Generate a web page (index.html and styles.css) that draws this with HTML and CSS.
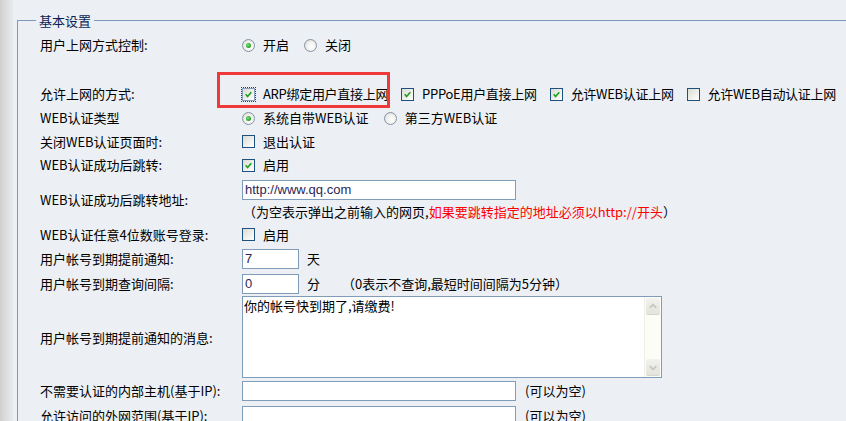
FILE: index.html
```html
<!DOCTYPE html>
<html lang="zh-CN">
<head>
<meta charset="utf-8">
<title>基本设置</title>
<link rel="stylesheet" href="styles.css">
</head>
<body>
<div class="page">
  <div class="strip"></div>
  <div class="main">
    <fieldset class="box">
      <legend>基本设置</legend>
      <div class="form">
        <div class="row r1">
          <div class="lbl">用户上网方式控制:</div>
          <div class="ctl">
            <span class="opt"><span class="radio on"></span>开启</span>
            <span class="opt"><span class="radio"></span>关闭</span>
          </div>
        </div>
        <div class="row r2">
          <div class="lbl">允许上网的方式:</div>
          <div class="ctl">
            <span class="opt"><span class="cb focus"><svg viewBox="0 0 13 13"><path d="M3.2 6.2 L5.4 8.8 L9.8 3.9"/></svg></span>ARP绑定用户直接上网</span>
            <span class="opt"><span class="cb"><svg viewBox="0 0 13 13"><path d="M3.2 6.2 L5.4 8.8 L9.8 3.9"/></svg></span>PPPoE用户直接上网</span>
            <span class="opt"><span class="cb"><svg viewBox="0 0 13 13"><path d="M3.2 6.2 L5.4 8.8 L9.8 3.9"/></svg></span>允许WEB认证上网</span>
            <span class="opt"><span class="cb"></span>允许WEB自动认证上网</span>
          </div>
        </div>
        <div class="row r3">
          <div class="lbl">WEB认证类型</div>
          <div class="ctl">
            <span class="opt"><span class="radio on"></span>系统自带WEB认证</span>
            <span class="opt"><span class="radio"></span>第三方WEB认证</span>
          </div>
        </div>
        <div class="row r4">
          <div class="lbl">关闭WEB认证页面时:</div>
          <div class="ctl"><span class="opt"><span class="cb"></span>退出认证</span></div>
        </div>
        <div class="row r5">
          <div class="lbl">WEB认证成功后跳转:</div>
          <div class="ctl"><span class="opt"><span class="cb"><svg viewBox="0 0 13 13"><path d="M3.2 6.2 L5.4 8.8 L9.8 3.9"/></svg></span>启用</span></div>
        </div>
        <div class="row r6">
          <div class="lbl">WEB认证成功后跳转地址:</div>
          <div class="ctl col">
            <div class="input wide">http://www.qq.com</div>
            <div class="note">（为空表示弹出之前输入的网页,<span class="red">如果要跳转指定的地址必须以http://开头</span>）</div>
          </div>
        </div>
        <div class="row r7">
          <div class="lbl">WEB认证任意4位数账号登录:</div>
          <div class="ctl"><span class="opt"><span class="cb"></span>启用</span></div>
        </div>
        <div class="row r8">
          <div class="lbl">用户帐号到期提前通知:</div>
          <div class="ctl"><div class="input small">7</div><span class="unit">天</span></div>
        </div>
        <div class="row r9">
          <div class="lbl">用户帐号到期查询间隔:</div>
          <div class="ctl"><div class="input small">0</div><span class="unit">分</span><span class="hint">（0表示不查询,最短时间间隔为5分钟）</span></div>
        </div>
        <div class="row r10">
          <div class="lbl">用户帐号到期提前通知的消息:</div>
          <div class="ctl">
            <div class="textarea">
              <div class="ta-text">你的帐号快到期了,请缴费!</div>
              <div class="sb">
                <div class="sb-btn"><svg viewBox="0 0 15 15"><path d="M4 9 L7.5 5.5 L11 9"/></svg></div>
                <div class="sb-track"></div>
                <div class="sb-btn"><svg viewBox="0 0 15 15"><path d="M4 6 L7.5 9.5 L11 6"/></svg></div>
              </div>
            </div>
          </div>
        </div>
        <div class="row r11">
          <div class="lbl">不需要认证的内部主机(基于IP):</div>
          <div class="ctl"><div class="input wide"></div><span class="after">(可以为空)</span></div>
        </div>
        <div class="row r12">
          <div class="lbl">允许访问的外网范围(基于IP):</div>
          <div class="ctl"><div class="input wide"></div><span class="after">(可以为空)</span></div>
        </div>
      </div>
    </fieldset>
  </div>
</div>
<div class="redmark"></div>
</body>
</html>
```

FILE: styles.css
```css
html, body {
  margin: 0;
  padding: 0;
  height: 100%;
  overflow: hidden;
}
body {
  background: #ecf0f5;
  font-family: "Noto Sans CJK SC", "Noto Sans", sans-serif;
  font-size: 13px;
  color: #000;
}
.page {
  display: flex;
  height: 100%;
}
.strip {
  width: 13px;
  flex: none;
  background: linear-gradient(to right, #cfcfcf 0%, #dcdcdc 40%, #e8e9ea 100%);
}
.main {
  flex: 1;
  padding: 13px 0 0 4px;
}
.box {
  margin: 0;
  padding: 0;
  width: 900px;
  border: 1px solid #7e9aba;
  border-right: none;
  border-bottom: none;
  min-width: 0;
}
.box legend {
  margin-left: 18px;
  padding: 0 3px;
  line-height: 15px;
  font-size: 13px;
  color: #0b1d52;
}
.form {
  padding: 5px 0 0 22px;
}
.row {
  display: grid;
  grid-template-columns: 202px 1fr;
  align-items: center;
  line-height: 16px;
}
.r1 { height: 24px; }
.r2 { height: 49px; align-items: end; }
.r2 > div { height: 24px; display: flex; align-items: center; }
.r2 .opt { margin-right: 13px; letter-spacing: -0.3px; }
.r3 { height: 24px; }
.r4 { height: 23px; }
.r5 { height: 24px; }
.r6 { height: 46px; }
.r7 { height: 23px; }
.r8 { height: 25px; }
.r9 { height: 25px; }
.r10 { height: 83px; }
.r11 { height: 24px; }
.r12 { height: 25px; }
.ctl {
  display: flex;
  align-items: center;
  white-space: nowrap;
}
.ctl.col {
  flex-direction: column;
  align-items: flex-start;
  gap: 4px;
}
.opt {
  display: inline-flex;
  align-items: center;
  gap: 8px;
  margin-right: 15px;
}
.cb {
  width: 11px;
  height: 11px;
  border: 1px solid #1c5180;
  background: linear-gradient(135deg, #dcdcd5 0%, #f4f4f1 70%, #ffffff 100%);
  display: inline-flex;
  flex: none;
}
.cb.focus {
  outline: 1px dotted #2a3e6a;
  outline-offset: 0;
  border-color: #8aa0bd;
}
.cb svg {
  width: 11px;
  height: 11px;
}
.cb path {
  fill: none;
  stroke: #21a121;
  stroke-width: 2;
}
.radio {
  width: 11px;
  height: 11px;
  border-radius: 50%;
  border: 1px solid #8593a6;
  background: radial-gradient(circle at 60% 60%, #ffffff 0%, #f2f2ef 45%, #d4d4cf 100%);
  display: inline-flex;
  align-items: center;
  justify-content: center;
  flex: none;
}
.radio.on::after {
  content: "";
  width: 5px;
  height: 5px;
  border-radius: 50%;
  background: radial-gradient(circle at 40% 40%, #7fe07f 0%, #2aa62a 60%, #1c8a1c 100%);
}
.input {
  box-sizing: border-box;
  height: 20px;
  border: 1px solid #7f9db9;
  background: #fff;
  font-family: "Liberation Sans", Arial, sans-serif;
  font-size: 13px;
  line-height: 18px;
  padding: 0 2px;
  color: #2c1f55;
}
.input.wide { width: 274px; }
.input.small { width: 57px; }
.note { padding-left: 1px; }
.red { color: #ff0000; }
.unit { margin-left: 8px; }
.hint { margin-left: 22px; }
.after { margin-left: 9px; }
.textarea {
  box-sizing: border-box;
  width: 420px;
  height: 82px;
  border: 1px solid #7f9db9;
  background: #fff;
  display: flex;
  align-self: flex-start;
}
.r10 .ctl { align-self: stretch; align-items: flex-start; }
.ta-text {
  flex: 1;
  padding: 1px 1px;
  line-height: 16px;
}
.sb {
  width: 17px;
  flex: none;
  background: #fdfdf7;
  border-left: 1px solid #eeeee8;
  display: flex;
  flex-direction: column;
  padding: 1px 1px;
  box-sizing: border-box;
}
.sb-btn {
  height: 16px;
  background: linear-gradient(#f2f2ee, #e4e3dc);
  border-bottom: 1px solid #d8d6cc;
  border-radius: 2px;
  display: flex;
  align-items: center;
  justify-content: center;
}
.sb-btn svg { width: 15px; height: 15px; }
.sb-btn path {
  fill: none;
  stroke: #c8c8c2;
  stroke-width: 2;
}
.sb-track { flex: 1; }
.redmark {
  position: absolute;
  left: 217px;
  top: 72px;
  width: 167px;
  height: 30px;
  border: 3px solid #f03a3a;
}
```
